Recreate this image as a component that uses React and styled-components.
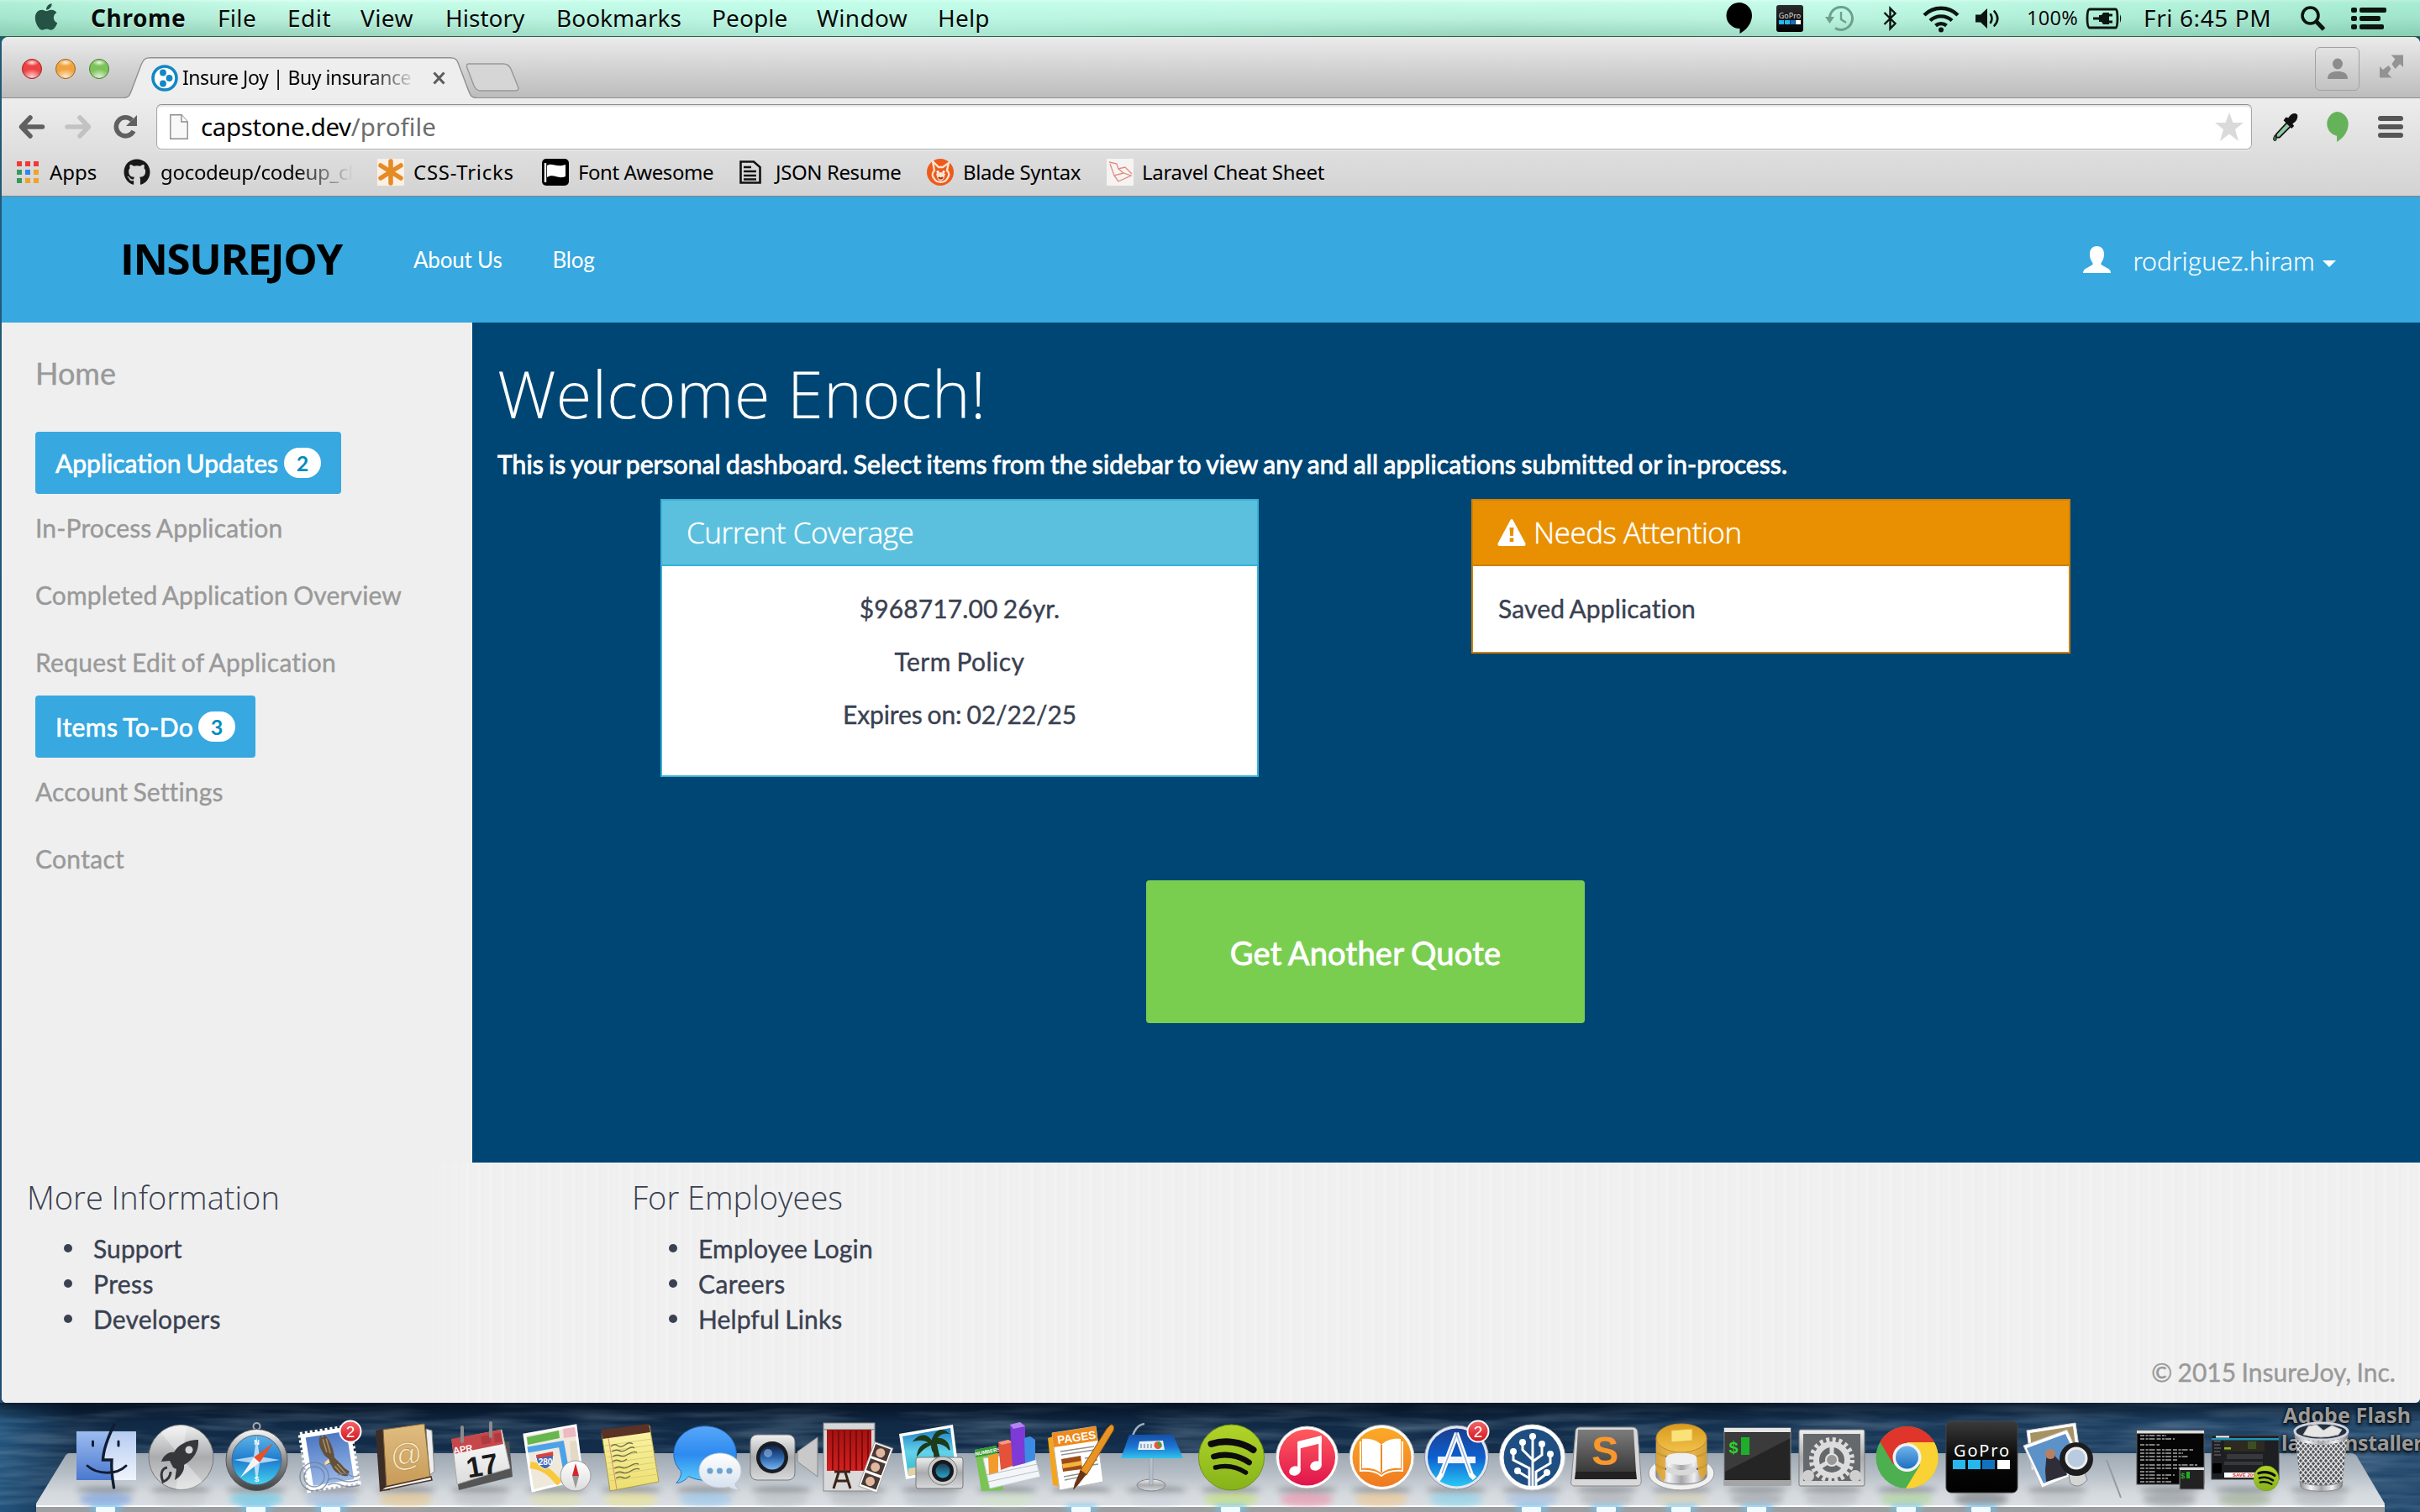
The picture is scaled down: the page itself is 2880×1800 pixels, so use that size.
import React from "react";
import styled, { createGlobalStyle } from "styled-components";
import { FaApple, FaGithub } from "react-icons/fa";

const UI = '"Noto Sans", "Open Sans", sans-serif';
const LATO = 'Lato, "Open Sans", sans-serif';
const OPEN = '"Open Sans", "Noto Sans", sans-serif';

const Global = createGlobalStyle`
  * { box-sizing: border-box; }
  body { margin: 0; overflow: hidden; background: #0b2340; font-variant-ligatures: none; }
  ul, p, h1, h2, h3 { margin: 0; padding: 0; }
  svg { display: block; flex: none; }
`;

const Desktop = styled.div`
  position: relative;
  width: 2880px;
  height: 1800px;
  display: flex;
  flex-direction: column;
  overflow: hidden;
  background:
    linear-gradient(90deg, rgba(40, 96, 140, 0.75) 0, rgba(20, 60, 100, 0) 90px),
    linear-gradient(90deg, rgba(30, 70, 105, 0) 60%, rgba(38, 80, 118, 0.75) 100%),
    linear-gradient(180deg, #0f4a3a 0, #0d4437 500px, #0d2f4c 900px, #0a1b33 1668px, #112b47 1700px, #14304e 1800px);
`;

/* ---------- menu bar ---------- */
const MenuBar = styled.header`
  height: 44px;
  flex: none;
  display: flex;
  align-items: center;
  justify-content: space-between;
  padding: 0 40px 0 40px;
  border-bottom: 1px solid #2c5f4d;
  font: 400 28px/42px ${UI};
  color: #050b09;
  background:
    linear-gradient(90deg, rgba(90, 190, 150, 0.22) 0, rgba(255, 255, 255, 0) 12%, rgba(190, 255, 235, 0.5) 35%, rgba(190, 255, 235, 0.35) 45%, rgba(255, 255, 255, 0) 62%, rgba(190, 255, 235, 0.25) 75%, rgba(80, 190, 150, 0.25) 100%),
    linear-gradient(180deg, #e2fff5 0, #c6fce8 3px, #b9f0dc 22px, #98d3bb 43px);
`;
const MenuGroup = styled.div`
  display: flex;
  align-items: center;
  height: 43px;
`;
const MenuItem = styled.span`
  width: ${(p) => p.$w}px;
  letter-spacing: ${(p) => p.$ls || 0}px;
  font-weight: ${(p) => (p.$bold ? 700 : 400)};
  font-size: ${(p) => p.$size || 28}px;
  line-height: 41px;
  padding-bottom: 1px;
  white-space: nowrap;
  text-shadow: 0 1px 1px rgba(255, 255, 255, 0.5);
`;
const Spot = styled.span`
  display: flex;
  justify-content: center;
  align-items: center;
  width: ${(p) => p.$w}px;
  margin-right: ${(p) => p.$gap || 0}px;
`;
const AppleSlot = styled(Spot)`
  padding-bottom: 4px;
  color: #245244;
`;
const GoProMini = styled.span`
  width: 32px;
  height: 32px;
  margin-right: 26px;
  border-radius: 3px;
  background: linear-gradient(#2c2c2c, #000);
  display: flex;
  flex-direction: column;
  align-items: center;
  justify-content: center;
  color: #ddd;
  font: 400 9px/10px ${UI};
`;

/* ---------- browser window ---------- */
const Browser = styled.section`
  width: 2878px;
  height: 1626px;
  margin-left: 2px;
  flex: none;
  display: flex;
  flex-direction: column;
  overflow: hidden;
  border-radius: 8px 8px 6px 6px;
  background: #f0f0f0;
`;
const TitleBar = styled.div`
  height: 73px;
  flex: none;
  display: flex;
  align-items: flex-start;
  padding-left: 24px;
  background: linear-gradient(#ebebeb 0, #d8d8d8 40%, #bcbcbc 100%);
  border-bottom: 1px solid #8f8f8f;
`;
const Lights = styled.div`
  display: flex;
  gap: 16px;
  padding-top: 26px;
  width: 121px;
`;
const Light = styled.i`
  width: 24px;
  height: 24px;
  border-radius: 50%;
  border: 1.5px solid ${(p) => p.$edge};
  background:
    radial-gradient(ellipse 8px 4px at 50% 16%, rgba(255, 255, 255, 0.85), rgba(255, 255, 255, 0)),
    radial-gradient(ellipse 12px 9px at 50% 92%, rgba(255, 255, 255, 0.75), rgba(255, 255, 255, 0)),
    ${(p) => p.$c};
`;
const Tab = styled.div`
  position: relative;
  width: 420px;
  height: 49px;
  margin-top: 24px;
  margin-bottom: -1px;
  display: flex;
  align-items: center;
  padding-left: 33px;
`;
const TabShape = styled.svg`
  position: absolute;
  left: 0;
  top: 0;
`;
const TabTitle = styled.span`
  position: relative;
  width: 282px;
  margin: 0 16px 2px 5px;
  overflow: hidden;
  white-space: nowrap;
  font: 400 23px/34px ${UI};
  letter-spacing: -0.45px;
  color: #000;
  mask-image: linear-gradient(90deg, #000 78%, transparent 99%);
`;
const Above = styled.span`
  position: relative;
`;
const NewTab = styled.svg`
  margin-top: 31px;
  margin-left: -14px;
`;
const TitleRight = styled.div`
  margin-left: auto;
  display: flex;
  align-items: flex-start;
  gap: 24px;
  padding: 12px 20px 0 0;
`;
const UserBox = styled.div`
  width: 53px;
  height: 52px;
  border: 1.5px solid #a2a2a2;
  border-radius: 6px;
  display: flex;
  justify-content: center;
  align-items: center;
`;
const Toolbar = styled.div`
  height: 117px;
  flex: none;
  display: flex;
  flex-direction: column;
  background: linear-gradient(#ededed, #e2e2e2 40%, #d3d3d3);
  border-bottom: 1.5px solid #8a8180;
`;
const NavRow = styled.div`
  display: flex;
  align-items: center;
  height: 54px;
  margin-top: 7px;
  padding-left: 20px;
`;
const Address = styled.div`
  width: 2494px;
  height: 54px;
  margin-left: 20px;
  display: flex;
  align-items: center;
  padding: 0 9px 0 15px;
  background: #fff;
  border: 1.5px solid #a6a6a6;
  border-top-color: #8d8d8d;
  border-radius: 6px;
  box-shadow: inset 0 2px 2px #e4e4e4, 0 1px 0 #f4f4f4;
  font: 400 29.5px/50px ${UI};
`;
const Host = styled.span`
  margin-left: 15px;
  color: #000;
  letter-spacing: -0.4px;
`;
const Path = styled.span`
  color: #6d6d6d;
  margin-right: auto;
  letter-spacing: 0.1px;
`;
const Extensions = styled.div`
  display: flex;
  align-items: center;
  margin-left: 24px;
  gap: 31px;
`;
const Bookmarks = styled.div`
  display: flex;
  align-items: center;
  height: 54px;
  padding-left: 17px;
`;
const Bookmark = styled.div`
  display: flex;
  align-items: center;
  gap: ${(p) => p.$gap}px;
  width: ${(p) => p.$w}px;
  white-space: nowrap;
  font: 400 24px/34px ${UI};
  color: #000;
  letter-spacing: ${(p) => p.$ls || 0}px;
`;
const Faded = styled.span`
  width: 232px;
  overflow: hidden;
  mask-image: linear-gradient(90deg, #000 68%, transparent 99%);
`;

/* ---------- site ---------- */
const SiteHeader = styled.div`
  height: 150px;
  flex: none;
  display: flex;
  align-items: center;
  justify-content: space-between;
  background: #37a8e0;
  color: #fff;
  padding: 0 100px 0 141px;
`;
const SiteNav = styled.nav`
  display: flex;
  align-items: center;
`;
const Logo = styled.span`
  width: 349px;
  padding-bottom: 5px;
  color: #000;
  font: 700 51px/60px ${OPEN};
  letter-spacing: -1.4px;
`;
const NavLink = styled.a`
  font: 400 26px/40px ${LATO};
  letter-spacing: -0.2px;
  margin-right: 60px;
`;
const Account = styled.div`
  display: flex;
  align-items: center;
  font: 300 32px/44px ${LATO};
  letter-spacing: 0.2px;
  -webkit-text-stroke: 0.3px #fff;
`;
const AccountName = styled.span`
  margin: 2px 9px 0 26px;
`;
const Caret = styled.i`
  margin-top: 10px;
  border: 8px solid transparent;
  border-top-color: #fff;
  border-bottom: 0;
`;
const SiteBody = styled.div`
  display: grid;
  grid-template-columns: 560px 1fr;
  height: 1000px;
  flex: none;
`;
const Sidebar = styled.aside`
  display: flex;
  flex-direction: column;
  align-items: flex-start;
  padding: 20px 0 0 40px;
  background: #efefef;
`;
const SideLink = styled.a`
  height: 80px;
  display: flex;
  align-items: center;
  margin-bottom: ${(p) => (p.$lead ? 30 : 0)}px;
  font: 400 ${(p) => (p.$lead ? 36 : 30)}px/40px ${LATO};
  letter-spacing: ${(p) => p.$ls}px;
  word-spacing: -1.5px;
  color: #999;
  -webkit-text-stroke: 0.4px #999;
`;
const SideButton = styled.a`
  width: ${(p) => p.$w}px;
  height: 74px;
  display: flex;
  align-items: center;
  justify-content: space-between;
  padding: 0 24px 1px 24px;
  border-radius: 4px;
  background: #37a8e0;
  color: #fff;
  font: 400 30px/40px ${LATO};
  letter-spacing: ${(p) => p.$ls}px;
  word-spacing: -1.5px;
  -webkit-text-stroke: 0.7px #fff;
`;
const Count = styled.b`
  width: 44px;
  height: 36px;
  border-radius: 18px;
  background: #fff;
  color: #008cba;
  font: 700 25px/36px ${LATO};
  letter-spacing: 0;
  text-align: center;
  -webkit-text-stroke: 0;
`;
const Main = styled.main`
  background: #004674;
  color: #fff;
  padding: 38px 0 0 30px;
`;
const Title = styled.h1`
  font: 300 78px/92px ${OPEN};
`;
const Lead = styled.p`
  font: 400 30px/76px ${LATO};
  letter-spacing: 0.1px;
  word-spacing: -1.5px;
  margin-bottom: 4px;
  -webkit-text-stroke: 0.9px #fff;
`;
const Panels = styled.div`
  display: flex;
  align-items: flex-start;
  gap: 253px;
  margin-left: 194px;
`;
const Panel = styled.section`
  width: ${(p) => p.$w}px;
  border: 2px solid ${(p) => p.$edge};
  background: #fff;
`;
const PanelHead = styled.h3`
  height: 78px;
  display: flex;
  align-items: center;
  gap: 9px;
  padding: 0 29px 0;
  background: ${(p) => p.$bg};
  border-bottom: 2px solid ${(p) => p.$edge};
  font: 300 35px/50px ${OPEN};
  letter-spacing: ${(p) => p.$ls}px;
  -webkit-text-stroke: 0.5px #fff;
`;
const PanelBody = styled.div`
  padding: 29px 30px;
  display: flex;
  flex-direction: column;
  align-items: ${(p) => (p.$center ? "center" : "flex-start")};
  gap: 20px;
  padding-bottom: ${(p) => (p.$center ? 51 : 30)}px;
  color: #3a4151;
`;
const Line = styled.p`
  font: 400 30px/43px ${LATO};
  letter-spacing: ${(p) => p.$ls}px;
  word-spacing: -1.5px;
  -webkit-text-stroke: 0.4px #3a4151;
`;
const Quote = styled.a`
  display: flex;
  align-items: center;
  justify-content: center;
  width: 522px;
  height: 170px;
  margin: 123px 0 0 772px;
  padding-top: 1px;
  border-radius: 4px;
  background: #79ce50;
  font: 400 38px/50px ${LATO};
  letter-spacing: 0.25px;
  word-spacing: -1.5px;
  -webkit-text-stroke: 0.9px #fff;
`;
const Footer = styled.footer`
  flex: 1;
  display: flex;
  flex-direction: column;
  padding: 18px 29px 0 30px;
  background:
    linear-gradient(90deg, #efefef 500px, rgba(239, 239, 239, 0) 560px),
    repeating-linear-gradient(90deg, #f0f0f0 0 6px, #f2f2f2 6px 10px, #efefef 10px 14px);
  color: #3a4151;
`;
const FootCols = styled.div`
  display: grid;
  grid-template-columns: 720px 1fr;
`;
const FootHead = styled.h3`
  font: 300 38px/46px ${OPEN};
  margin-bottom: 17px;
`;
const FootItem = styled.li`
  display: flex;
  align-items: center;
  gap: 25px;
  padding-left: 44px;
  font: 400 30px/42px ${LATO};
  letter-spacing: ${(p) => p.$ls}px;
  word-spacing: -1.5px;
  -webkit-text-stroke: 0.4px #3a4151;
  &::before {
    content: "";
    width: 10px;
    height: 10px;
    border-radius: 50%;
    background: #3a4151;
  }
`;
const Copyright = styled.p`
  margin-top: 21px;
  text-align: right;
  font: 400 30px/42px ${LATO};
  letter-spacing: 0.05px;
  word-spacing: -1.5px;
  color: #999;
  -webkit-text-stroke: 0.4px #999;
`;

/* ---------- dock ---------- */
const DockArea = styled.div`
  position: relative;
  height: 130px;
  flex: none;
`;
const Shelf = styled.svg`
  position: absolute;
  left: 0;
  top: 0;
`;
const DockRow = styled.div`
  position: relative;
  display: flex;
  padding: 20px 0 0 82px;
`;
const DockCell = styled.div`
  width: 89.3px;
  height: 110px;
  flex: none;
`;
const DockGap = styled.div`
  width: 45px;
`;
const DesktopLabel = styled.span`
  position: absolute;
  left: ${(p) => p.$x}px;
  top: ${(p) => p.$y}px;
  white-space: nowrap;
  font: 700 25px/32px ${UI};
  letter-spacing: ${(p) => p.$ls}px;
  color: #9a9a9a;
  text-shadow: 0 2px 4px #000, 0 0 3px #000;
`;

const G = ({ id, c, x = 0 }) => (
  <linearGradient id={id} x1="0" y1="0" x2={x} y2={x ? 0 : 1}>
    {c.map((k, i) => (
      <stop key={i} offset={i / (c.length - 1)} stopColor={k} />
    ))}
  </linearGradient>
);

const SpotifyMark = ({ cx, cy, r }) => (
  <g transform={`translate(${cx} ${cy}) scale(${r / 39})`}>
    <circle r="39" fill="url(#spot)" stroke="#6c9413" strokeWidth="1" />
    <g fill="none" stroke="#0c0c0c" strokeLinecap="round">
      <path d="M-24 -16C-8 -21 12 -19 26 -9" strokeWidth="8" />
      <path d="M-21 -1C-8 -5 8 -3 21 6" strokeWidth="6.8" />
      <path d="M-19 12C-7 9 6 11 17 18" strokeWidth="5.6" />
    </g>
  </g>
);

const CountBadge = ({ x, y }) => (
  <g>
    <circle cx={x} cy={y} r="12.5" fill="url(#badge)" stroke="#fff" strokeWidth="2" />
    <text x={x} y={y + 7} fontSize="19" fill="#fff" textAnchor="middle" fontFamily='"Liberation Sans", sans-serif'>2</text>
  </g>
);

const icons = {
  finder: (
    <g>
      <rect x="9" y="14" width="71" height="58" fill="url(#findR)" />
      <path d="M9 14H51C44 30 41 40 41 48H51L52 72H9Z" fill="url(#findL)" />
      <g fill="none" stroke="#111c33" strokeWidth="3" strokeLinecap="round">
        <path d="M54 6C44 26 41 38 40.500 48H51C50 60 52 72 53.500 81" strokeWidth="3.400" />
        <path d="M22 55C34 66 57 66 68 55M28.500 26V31M59 26V31" />
      </g>
    </g>
  ),
  launchpad: (
    <g>
      <circle cx="44.500" cy="45" r="38.500" fill="url(#steel)" stroke="#777" />
      <path d="M44.500 45L20 15A38 38 0 0 1 52 7ZM44.500 45L70 74A38 38 0 0 1 38 83Z" fill="#fff" opacity=".35" />
      <path d="M65 24C52 24 41 30 36 39C30 38 24 42 21 50L31 49L35 57L39 59L37 72C44 68 49 61 48 54C60 47 66 37 65 24Z" fill="#35373a" />
      <circle cx="54" cy="36" r="4.500" fill="#d5d5d5" />
      <path d="M28 57C22 58 19 64 23 74C28 72 32 68 32 62" fill="none" stroke="#35373a" strokeWidth="3" />
    </g>
  ),
  safari: (
    <g>
      <circle cx="44.500" cy="8" r="4" fill="none" stroke="#aaa" strokeWidth="2" />
      <circle cx="44.500" cy="48" r="36.500" fill="url(#steel2)" stroke="#555" />
      <circle cx="44.500" cy="48" r="29.500" fill="url(#sea)" stroke="#567" />
      <path d="M44.500 20L48 44L72 48L48 52L44.500 76L41 52L17 48L41 44Z" fill="#e4f3ff" opacity=".75" />
      <path d="M64 28L48 51L41 45Z" fill="#e8502a" />
      <path d="M25 69L41 45L48 51Z" fill="#f4f4f4" />
      <g fontSize="9" fontWeight="700" fill="#fff" textAnchor="middle" fontFamily='"Liberation Sans", sans-serif'>
        <text x="44.500" y="30">N</text><text x="44.500" y="74">S</text>
      </g>
    </g>
  ),
  mail: (
    <g>
      <g transform="rotate(-9 44 46)">
        <rect x="12" y="12" width="60" height="68" fill="#fff" stroke="#fff" strokeWidth="5" strokeDasharray="3 3" />
        <rect x="18" y="17" width="49" height="58" fill="url(#stamp)" />
        <path d="M36 17C32 22 32 30 35 37C36 41 38 43 41 46L35 50L36 53L42 52L45 60C49 66 55 70 60 70L63 65L58 60C55 55 51 50 48 46C49 36 46 22 40 17L38 21Z" fill="#64513a" />
        <path d="M38 22L40 38M42 22L44 40M50 54L58 66M47 56L54 67" stroke="#a48e69" strokeWidth="1.600" />
        <path d="M35 50L41 46L42 51L36 53Z" fill="#eadfc4" />
        <path d="M33.500 50.500L36 50L36 53Z" fill="#e0a52c" />
      </g>
      <g fill="none" stroke="#6f7f99" strokeWidth="1.500" opacity=".75">
        <circle cx="24" cy="68" r="17" /><circle cx="24" cy="68" r="12" />
        <path d="M40 72Q48 68 56 72T76 72M40 78Q48 74 56 78T78 78M52 66Q60 62 66 66T77 66" />
      </g>
      <CountBadge x={67} y={14} />
    </g>
  ),
  contacts: (
    <g>
      <path d="M68 11L75 13L78 62L72 66Z" fill="#eee" stroke="#888" />
      <path d="M8 13L19 11L25 84L13 85Z" fill="#3c2d26" />
      <path d="M17 12L66 5L73 68L21 80Z" fill="url(#tan)" stroke="#8b6838" />
      <path d="M13 85L75 72L74 68L20 80Z" fill="#f3f3f3" stroke="#4a3324" strokeWidth="1.500" />
      <text x="45" y="55" fontSize="38" textAnchor="middle" fill="#f8e9c9" stroke="#b58a48" strokeWidth=".6" transform="rotate(-6 44 45)" fontFamily='"Liberation Sans", sans-serif'>@</text>
    </g>
  ),
  calendar: (
    <g>
      <path d="M11 36L78 26L82 68L18 84Z" fill="#555" />
      <path d="M10 24L69 12L79 58Q50 66 16 77Z" fill="url(#paper)" stroke="#aaa" />
      <path d="M9 23L68 12L71 29L12 41Z" fill="#c7484b" />
      <path d="M44 20L56 18V28L46 30ZM60 17L68 15.500L69 26L61 27.500Z" fill="#b03b3f" />
      <path d="M22 26V9M56 20V4" stroke="#8b8b8b" strokeWidth="4" strokeLinecap="round" />
      <g transform="rotate(-10 42 50)" fontFamily='"Liberation Sans", sans-serif' fontWeight="700">
        <text x="14" y="36" fontSize="11" fill="#fff">APR</text>
        <text x="45" y="67" fontSize="34" fill="#1a1a1a" textAnchor="middle">17</text>
      </g>
    </g>
  ),
  maps: (
    <g>
      <path d="M6 18L67 7L75 70L16 85Z" fill="#efe9dc" stroke="#fff" strokeWidth="3" />
      <path d="M9 21L47 13L48 22L10 30Z" fill="#65b74e" />
      <path d="M52 11L66 9L68 20L53 22Z" fill="#efb9c4" />
      <path d="M60 26L68 25L72 55L62 58Z" fill="#e3d9c4" />
      <path d="M10 36L50 29L56 62" fill="none" stroke="#4ca2e8" strokeWidth="7" />
      <path d="M13 54C30 56 38 64 48 76" fill="none" stroke="#f8c93c" strokeWidth="8" />
      <path d="M20 42L40 38C42 50 38 56 31 59C24 56 20 52 20 42Z" fill="#3f69b8" stroke="#fff" />
      <path d="M20 42L40 38L40.500 43L20.500 46Z" fill="#d8433f" />
      <text x="31" y="54" fontSize="10" fontWeight="700" fill="#fff" textAnchor="middle" fontFamily='"Liberation Sans", sans-serif'>280</text>
      <circle cx="67" cy="67" r="18" fill="url(#paper)" stroke="#9a9a9a" />
      <path d="M67 52L71 67H63Z" fill="#d8242b" /><path d="M67 82L71 67H63Z" fill="#9a9a9a" />
    </g>
  ),
  notes: (
    <g>
      <path d="M9 16L66 7L77 74L19 85Z" fill="url(#note)" stroke="#a99a4a" />
      <path d="M8 12L65 5L67 15L10 23Z" fill="#5b3226" />
      <path d="M13 31L69 23M14 38L70 30M15 45L71 37M16 52L72 44M17 59L73 51M18 66L75 58M19 73L76 65" stroke="#d6cf7c" />
      <g fill="none" stroke="#5c5a3a" strokeWidth="1.400" opacity=".85">
        <path d="M20 32q4-4 8-1t9-1 9-1M21 38q5-3 9-1t10-2 8-1M22 44q5-3 9-1t10-2 10-2M22 50q4-3 8-1t9-2M24 58q5-3 9-1t10-2 10-2M25 64q5-3 9-1t10-2 10-2M26 70q4-3 8-1t9-2" />
      </g>
      <path d="M17 22L27 83" stroke="#d98a7c" />
    </g>
  ),
  messages: (
    <g>
      <path d="M44 8C66 8 82 23 82 42C82 62 66 74 46 74C38 74 30 72 24 69C20 74 14 77 9 77C13 73 15 69 15 63C9 57 6 50 6 42C6 23 22 8 44 8Z" fill="url(#msg)" stroke="#2469bd" transform="scale(.98)" />
      <path d="M61 40C75 40 86 49 86 61C86 68 83 72 79 76C79 80 82 82 85 84C79 84 74 82 71 80C68 81 65 81 61 81C47 81 36 73 36 61C36 49 47 40 61 40Z" fill="url(#msg2)" stroke="#b9c6d6" />
      <circle cx="49" cy="61" r="3.600" fill="#6fa3cf" /><circle cx="60.500" cy="61" r="3.600" fill="#6fa3cf" /><circle cx="72" cy="61" r="3.600" fill="#6fa3cf" />
    </g>
  ),
  facetime: (
    <g>
      <path d="M87 21V68L63 50V38Z" fill="#c9c9c9" stroke="#8c8c8c" />
      <rect x="7" y="18" width="53" height="54" rx="8" fill="url(#steel)" stroke="#777" />
      <circle cx="33" cy="45" r="19" fill="#191c22" />
      <circle cx="33" cy="45" r="14.500" fill="url(#lens)" />
      <circle cx="28" cy="40" r="5" fill="#a9d0ff" opacity=".5" />
    </g>
  ),
  photobooth: (
    <g>
      <rect x="5" y="4" width="61" height="8" fill="#d7d7d7" stroke="#888" />
      <rect x="5" y="12" width="61" height="73" fill="#d9d9d9" stroke="#888" />
      <rect x="9" y="12" width="53" height="49" fill="url(#curtain)" />
      <path d="M16 13V60M23 13V60M30 13V60M37 13V60M44 13V60M51 13V60M58 13V60" stroke="#7d0b0b" strokeWidth="2" />
      <path d="M18 62H37M23 63L17 82M31 63L37 82M20 73H34" stroke="#3a2418" strokeWidth="3" fill="none" />
      <g transform="rotate(20 68 56)">
        <rect x="56" y="29" width="23" height="56" fill="#fff" stroke="#aaa" />
        <path d="M58 31h19v15h-19zM58 49h19v15h-19zM58 67h19v15h-19z" fill="#4a3a35" />
        <circle cx="67" cy="39" r="5.500" fill="#e0b7a0" /><circle cx="67" cy="57" r="5.500" fill="#e0b7a0" /><circle cx="67" cy="75" r="5.500" fill="#e0b7a0" />
      </g>
    </g>
  ),
  iphoto: (
    <g>
      <path d="M6 17L70 6L77 60L14 71Z" fill="#fff" />
      <path d="M10 20L67 10L73 57L17 67Z" fill="url(#beach)" />
      <path d="M17 58L73 50V57L17 67Z" fill="#e4d2a4" />
      <path d="M48 60C50 44 50 34 45 25" stroke="#3c2c18" strokeWidth="4" fill="none" />
      <path d="M45 26C38 16 30 18 24 25C32 23 38 24 43 28C34 28 29 34 28 42C34 34 40 31 45 29C44 36 48 42 54 45C52 38 51 32 50 28C56 28 62 30 66 36C65 26 58 21 50 23C54 17 59 15 64 16C56 9 48 14 45 26Z" fill="#1d3a1b" stroke="#1d3a1b" strokeWidth="1.500" />
      <rect x="26" y="45" width="56" height="37" rx="3" fill="url(#steel)" stroke="#777" />
      <circle cx="58" cy="61" r="17" fill="#ccc" stroke="#777" /><circle cx="58" cy="61" r="13" fill="#16191f" /><circle cx="58" cy="61" r="8.500" fill="url(#lens2)" />
    </g>
  ),
  numbers: (
    <g>
      <path d="M6 36L31 31L40 84L14 85Z" fill="#78c552" />
      <path d="M16 46L76 38L84 68L24 82Z" fill="#f3f6f8" stroke="#c6ced4" />
      <path d="M6 36L32 31L33 40L7 45Z" fill="#3a9a35" />
      <text x="7" y="43" fontSize="6" fontWeight="700" fill="#fff" transform="rotate(-11 7 43)" fontFamily='"Liberation Sans", sans-serif'>NUMBERS</text>
      <path d="M22 43L34 40V63L23 66Z" fill="#f29a2c" /><path d="M34 27L46 24L51 27V55L37 60Z" fill="#e4523a" /><path d="M34 27L46 24L51 27L38 30Z" fill="#f79883" />
      <path d="M48 6L60 3L66 8V52L51 56Z" fill="#7d3ad6" /><path d="M48 6L60 3L66 8L52 11Z" fill="#b385f2" /><path d="M65 22L72 20L78 24V48L66 52Z" fill="#3c8ce6" />
      <path d="M20 66l61-13M22 74l60-13" stroke="#b7bec5" fill="none" />
    </g>
  ),
  pages: (
    <g>
      <path d="M4 22L10 20L18 80L10 78Z" fill="#f5a51c" />
      <path d="M9 16L61 8L70 74L18 84Z" fill="#fff" stroke="#bbb" />
      <path d="M9 16L61 8L63 25L11 33Z" fill="#ee8a1c" />
      <text x="16" y="29" fontSize="13.500" fill="#fff" fontWeight="700" transform="rotate(-8 16 29)" fontFamily='"Liberation Sans", sans-serif'>PAGES</text>
      <path d="M20 47L43 43L45 59L22 62Z" fill="#9c4a1a" /><path d="M21 53L44 49L45 54L22 58Z" fill="#f5b53c" />
      <path d="M19 38l40-6M20 42l40-6M48 46l14-2M49 50l14-2M50 55l14-2M23 68l22-4M24 72l20-4" stroke="#8f8f8f" strokeWidth="1.400" />
      <path d="M79 6C83 6 83 10 82 13L50 66L42 62L74 11Z" fill="#e99322" stroke="#8c520f" /><path d="M43 60L50 65L39 79L34 84L36 76Z" fill="#6a3415" />
    </g>
  ),
  keynote: (
    <g>
      <path d="M13 36C14 18 20 6 30 5" fill="none" stroke="#9fb0bd" strokeWidth="2.400" />
      <ellipse cx="38" cy="78" rx="17" ry="7" fill="url(#steel)" stroke="#7a8794" />
      <path d="M36 44H40V78H36Z" fill="#b7c0ca" stroke="#8995a1" strokeWidth=".6" />
      <path d="M12 18L64 18L76 46L2 46Z" fill="url(#key)" />
      <path d="M24 26L52 25L54 36L22 36Z" fill="#e8f1fb" />
      <circle cx="46" cy="30.500" r="4.500" fill="#e35a3a" /><path d="M46 30.500V26A4.500 4.500 0 0 1 50 33Z" fill="#44a245" />
      <path d="M26 29V34M30 29V34M34 29V34M38 29V34" stroke="#8a98a8" strokeWidth="1.500" />
    </g>
  ),
  spotify: <SpotifyMark cx={44.5} cy={45} r={39} />,
  itunes: (
    <g>
      <circle cx="44.500" cy="45" r="37" fill="#fff" stroke="#bbb" />
      <circle cx="44.500" cy="45" r="33.500" fill="url(#itunes)" />
      <path d="M35 27V60M60 21V54" fill="none" stroke="#fff" strokeWidth="3.500" /><path d="M33.300 26L61.700 19V28L33.300 35Z" fill="#fff" />
      <ellipse cx="30" cy="61" rx="7" ry="5.500" fill="#fff" transform="rotate(-20 30 61)" /><ellipse cx="55" cy="55" rx="7" ry="5.500" fill="#fff" transform="rotate(-20 55 55)" />
    </g>
  ),
  ibooks: (
    <g>
      <circle cx="44.500" cy="45" r="38.500" fill="#fff" stroke="#bbb" />
      <circle cx="44.500" cy="45" r="35" fill="url(#ibooks)" />
      <path d="M44 30C38 24 30 22 21 23V58C31 57 38 59 44 64C50 59 57 57 67 58V23C58 22 50 24 44 30Z" fill="#fff" />
      <path d="M44 30V63" stroke="#ee8d24" strokeWidth="2" /><path d="M19 26V61C31 60 38 62 44 67C50 62 57 60 69 61V26" fill="none" stroke="#fff" strokeWidth="2" />
    </g>
  ),
  appstore: (
    <g>
      <circle cx="44.500" cy="45" r="38" fill="#e2e6ee" stroke="#8a94a8" />
      <circle cx="44.500" cy="45" r="34.500" fill="url(#appst)" />
      <path d="M22 44H67V52H22Z" fill="#f0f4fa" />
      <path d="M45 16L26 66L22 72M44 16L62 66L66 70" fill="none" stroke="#fff" strokeWidth="6" />
      <path d="M45 16L27 64M44 16L61 64" fill="none" stroke="#98b4d8" strokeWidth="1.500" />
      <CountBadge x={70} y={14} />
    </g>
  ),
  sourcetree: (
    <g>
      <circle cx="44.500" cy="45" r="39" fill="#fff" stroke="#ccc" /><circle cx="44.500" cy="45" r="34" fill="#1f4f82" />
      <g stroke="#fff" strokeWidth="3" fill="none">
        <path d="M41 79V58L22 48V40M41 79V70L28 62M45 79V22M49 79V62L66 52V42M49 74L62 64M45 48L33 36V28M45 50L56 42V30" />
      </g>
      <g fill="#fff"><circle cx="45" cy="20" r="4" /><circle cx="22" cy="38" r="4" /><circle cx="33" cy="27" r="4" /><circle cx="56" cy="29" r="4" /><circle cx="66" cy="41" r="4" /><circle cx="27" cy="61" r="4" /><circle cx="62" cy="63" r="4" /></g>
    </g>
  ),
  sublime: (
    <g>
      <path d="M7 14C7 10 10 9 13 9H74C79 9 81 12 81 16L85 70C86 76 84 79 80 79H6C2 79 1 76 2 72Z" fill="#d8d8d8" stroke="#888" />
      <path d="M10 12H76L79 62H7Z" fill="url(#subl)" /><path d="M7 62H79L80 71H6Z" fill="#222" />
      <text x="42" y="54" fontSize="48" fontWeight="700" fill="#f8972b" textAnchor="middle" fontFamily='"Liberation Sans", sans-serif'>S</text>
    </g>
  ),
  sequel: (
    <g>
      <ellipse cx="44" cy="64" rx="39" ry="20" fill="#f1f1f1" stroke="#999" /><ellipse cx="44" cy="64" rx="32" ry="15" fill="#ddd" />
      <path d="M14 22V68C18 80 70 80 74 68V22Z" fill="url(#steelH)" stroke="#888" />
      <path d="M14 38C20 48 68 48 74 38M14 53C20 63 68 63 74 53" fill="none" stroke="#555" strokeWidth="2.500" />
      <path d="M14 22V60L18 68L22 74L25 70V44C34 38 54 38 62 44L64 62L68 72L74 64V22Z" fill="#e3a72c" opacity=".85" />
      <path d="M26 44C34 38 54 38 62 44L62 50Q44 58 26 50Z" fill="#efefef" /><path d="M26 55Q44 64 62 55V62Q44 71 26 62Z" fill="#d9d9d9" />
      <ellipse cx="44" cy="22" rx="30" ry="17" fill="url(#honey)" stroke="#b98a2e" />
      <path d="M32 13L57 11V25L32 27Z" fill="#fbe278" stroke="#e0b43c" />
    </g>
  ),
  terminal: (
    <g>
      <rect x="5" y="10" width="79" height="68" fill="#252525" stroke="#888" /><rect x="5" y="10" width="79" height="5" fill="#e5e5e5" />
      <path d="M6 62L84 22V16H6Z" fill="#fff" opacity=".1" /><rect x="5" y="72" width="79" height="6" fill="#a5a5a5" />
      <text x="10" y="40" fontSize="20" fontWeight="700" fill="#2bd32b" fontFamily='"Liberation Mono", monospace'>$</text><rect x="25" y="21" width="10" height="21" fill="#1fae2a" />
    </g>
  ),
  prefs: (
    <g>
      <rect x="5" y="12" width="78" height="67" rx="2" fill="url(#steel)" stroke="#777" /><rect x="10" y="17" width="68" height="56" fill="#66696c" />
      <circle cx="16" cy="67" r="7" fill="#cfcfcf" /><circle cx="72" cy="67" r="7" fill="#cfcfcf" />
      <circle cx="44" cy="48" r="24" fill="none" stroke="#dcdcdc" strokeWidth="6" strokeDasharray="4 3.540" />
      <circle cx="44" cy="48" r="18.500" fill="none" stroke="#dcdcdc" strokeWidth="7" />
      <path d="M44 48V30M44 48L29 57M44 48L59 57" stroke="#dcdcdc" strokeWidth="5" /><circle cx="44" cy="48" r="7" fill="#999" stroke="#e5e5e5" strokeWidth="2" />
    </g>
  ),
  chrome: (
    <g>
      <circle cx="44.500" cy="45" r="37" fill="#4caf50" />
      <path d="M12.500 26.500L28 53L44.500 45V27H77A37 37 0 0 0 12.500 26.500Z" fill="#e0352b" />
      <path d="M77 27H44.500L60 54L43 82A37 37 0 0 0 77 27Z" fill="#fbd233" />
      <circle cx="44.500" cy="45" r="17" fill="#f2f2f2" /><circle cx="44.500" cy="45" r="13.500" fill="url(#chr)" />
    </g>
  ),
  gopro: (
    <g>
      <rect x="2" y="2" width="85" height="85" rx="6" fill="url(#gop)" stroke="#444" />
      <text x="44" y="44" fontSize="20" fill="#fff" textAnchor="middle" textLength="66" fontFamily={UI}>GoPro</text>
      <path d="M10 48h15v11H10z" fill="#25b7ee" /><path d="M28 48h15v11H28z" fill="#25b7ee" /><path d="M45 48h15v11H45z" fill="#1173bd" /><path d="M63 48h15v11H63z" fill="#fff" />
    </g>
  ),
  preview: (
    <g>
      <path d="M8 13L66 4L73 52L14 60Z" fill="#fff" stroke="#ccc" /><path d="M12 16L63 8L66 30L14 38Z" fill="#a79263" />
      <path d="M4 31L56 12L78 60L26 81Z" fill="#fff" stroke="#bbb" /><path d="M8 34L54 17L73 57L28 76Z" fill="#5d92c9" />
      <path d="M32 38C38 34 42 38 42 44L50 52L56 66L31 74L30 60Z" fill="#2f2d38" /><circle cx="36" cy="41" r="6" fill="#b98060" />
      <path d="M58 66L76 60L80 72Q70 84 60 76Z" fill="#d5d5d5" stroke="#888" /><circle cx="67" cy="47" r="20" fill="#1d1d1f" /><circle cx="67" cy="46" r="12" fill="#b9cbe0" stroke="#eee" strokeWidth="3" />
    </g>
  ),
  miniTerminal: (
    <g>
      <rect x="5" y="13" width="80" height="64" fill="#050505" stroke="#555" /><rect x="5" y="13" width="80" height="3.500" fill="#ddd" />
      <path d="M9 19H40M9 23H50M9 30H32M9 36H72M9 40H60M9 44H66M9 48H54M9 54H78M9 58H74M9 62H28M9 66H50M9 70H42M9 74H46" stroke="#a8a8a8" strokeWidth="1.400" strokeDasharray="5 1.500 3 1 7 2" />
      <rect x="56" y="57" width="29" height="26" fill="#222" stroke="#888" /><rect x="56" y="57" width="29" height="3" fill="#ddd" /><rect x="64" y="62" width="4" height="8" fill="#1fae2a" />
      <text x="57" y="70" fontSize="9" fill="#2bd32b" fontFamily='"Liberation Mono", monospace'>$</text>
    </g>
  ),
  miniSpotify: (
    <g>
      <rect x="5" y="19" width="80" height="52" fill="#1e1f22" stroke="#444" /><rect x="5" y="22" width="80" height="2.500" fill="#1f93b8" /><rect x="10" y="19.500" width="16" height="2" fill="#fff" />
      <rect x="20" y="25" width="48" height="13" fill="#2e2a22" /><path d="M48 26h10v9H48z" fill="#3d4f22" /><rect x="20" y="33" width="8" height="2.500" fill="#8cbb1c" />
      <path d="M23 41H66V47H23ZM20 50H66V54H20Z" fill="#36383c" /><rect x="6" y="52" width="11" height="12" fill="#000" /><path d="M8 26h8M8 30h7M8 34h8M8 38h7M8 42h8" stroke="#777" />
      <rect x="20" y="63" width="44" height="6" fill="#fff" /><text x="30" y="68.500" fontSize="6" fontWeight="700" fill="#e11f2b" fontFamily='"Liberation Sans", sans-serif'>SAVE 20%</text>
      <SpotifyMark cx={70} cy={70} r={15} />
    </g>
  ),
  trash: (
    <g>
      <path d="M14 17L21 79C25 86 66 86 70 79L77 17Z" fill="#55585c" />
      <path d="M14 17L21 79C25 86 66 86 70 79L77 17Z" fill="url(#mesh)" />
      <ellipse cx="45.500" cy="15" rx="31" ry="9" fill="#23313f" />
      <path d="M13 14C16 30 75 30 78 14L77 22C70 32 20 32 14 22Z" fill="url(#steelH)" />
      <path d="M24 18L30 8L40 6L48 13L58 7L70 12L66 18Q45 24 24 18Z" fill="#e6e6e6" stroke="#b5b5b5" />
      <ellipse cx="45.500" cy="14" rx="31.500" ry="10" fill="none" stroke="#d2d2dc" strokeWidth="3" />
      <path d="M20 73C26 80 65 80 71 73L70 80C66 87 25 87 21 80Z" fill="url(#steelH)" stroke="#888" />
    </g>
  ),
};

const dock = [
  ["finder", "#6f9ae0", 1], ["launchpad", "#c2c6c9"], ["safari", "#58c7e8", 1], ["mail", "#9db8dd", 1], ["contacts", "#e8c382"],
  ["calendar", "#b9bdc2"], ["maps", "#e0dfa8"], ["notes", "#eee487"], ["messages", "#8fc3ee"], ["facetime", "#b8bdc2"],
  ["photobooth", "#b7bbbf"], ["iphoto", "#b4bcc2"], ["numbers", "#cfe3c4"], ["pages", "#dcdfe2", 1], ["keynote", "#cbd2da"],
  ["spotify", "#bfe06a", 1], ["itunes", "#f08ba6"], ["ibooks", "#f3c486"], ["appstore", "#7ed1ee"], ["sourcetree", "#9dbbe0", 1],
  ["sublime", "#a8abae", 1], ["sequel", "#d6cdb0", 1], ["terminal", "#9a9ea2", 1], ["prefs", "#b4b8bc"], ["chrome", "#a9d490", 1],
  ["gopro", "#6d7276", 1], ["preview", "#b9bec3"],
];

const DockIcon = ({ name, glow, running }) => (
  <DockCell>
    <svg width="89.300" height="110" viewBox="0 0 89.300 110">
      <ellipse cx="44" cy="84" rx="36" ry="4" fill="#20262c" opacity=".35" filter="url(#soft)" />
      <ellipse cx="44" cy="95" rx="32" ry="8" fill={glow} opacity=".6" filter="url(#soft)" />
      {icons[name]}
      {running && (
        <g>
          <rect x="26" y="101" width="36" height="10" rx="4" fill="#6fc4f2" opacity=".7" filter="url(#soft)" />
          <rect x="32" y="104" width="23" height="6" rx="1" fill="#f2fbff" />
        </g>
      )}
    </svg>
  </DockCell>
);

const Defs = () => (
  <defs>
    <filter id="soft" x="-50%" y="-100%" width="200%" height="300%"><feGaussianBlur stdDeviation="3.500" /></filter>
    <filter id="sea-noise" x="0" y="0" width="100%" height="100%">
      <feTurbulence type="fractalNoise" baseFrequency="0.008 0.09" numOctaves="3" seed="4" />
      <feColorMatrix values="0 0 0 0 .5  0 0 0 0 .65  0 0 0 0 .8  0 0 0 1.1 -.42" />
    </filter>
    <G id="shade" c={["#04101f", "rgba(4,16,31,0)"]} />
    <G id="shelf" c={["#a2acb5", "#b9c0c8", "#d9dde1", "#e4e7ea"]} />
    <G id="findL" c={["#9dbdf0", "#4a78ce"]} /><G id="findR" c={["#b5cbf2", "#f0f4fc"]} /><G id="stamp" c={["#4d78c4", "#9bb9e8"]} />
    <G id="steel" c={["#f0f0f0", "#a9abad", "#d9dadb"]} /><G id="steel2" c={["#fafafa", "#8a8c8f", "#3f4245"]} />
    <G id="steelH" c={["#888a90", "#f6f6f8", "#a3a5aa", "#f0f0f2", "#7b7d82"]} x={1} />
    <G id="sea" c={["#5fb3e6", "#1d7cd0", "#46d3ee"]} /><G id="tan" c={["#e0bd80", "#c79a58"]} />
    <G id="paper" c={["#ffffff", "#dcdcdc"]} /><G id="note" c={["#fbf4a6", "#eddf6e"]} />
    <G id="msg" c={["#58a7f8", "#2c8af0", "#5fd0fb"]} /><G id="msg2" c={["#ffffff", "#d4e0ed"]} />
    <G id="lens" c={["#0e1f3f", "#2a62a8", "#78b5f0"]} /><G id="lens2" c={["#1b3b52", "#2aa5c9"]} />
    <G id="curtain" c={["#a31212", "#d42020"]} /><G id="beach" c={["#1c7cc4", "#64d2ea", "#2fb6c9"]} />
    <G id="key" c={["#1450a8", "#1c74d2", "#2fc4ec"]} /><G id="spot" c={["#b2d428", "#86b31b"]} />
    <G id="itunes" c={["#ff5b5e", "#e0144c"]} /><G id="ibooks" c={["#fbaa27", "#ef7a22"]} />
    <G id="appst" c={["#1b3f90", "#0d5fd0", "#29c8f6"]} /><G id="subl" c={["#7c7c7c", "#3a3a3a"]} />
    <G id="honey" c={["#d89a1e", "#f2c14a"]} /><G id="chr" c={["#6fb4ec", "#1f6fc0"]} /><G id="gop" c={["#3a3a3a", "#0a0a0a", "#000"]} />
    <G id="badge" c={["#f4686c", "#d0141c"]} />
    <pattern id="mesh" width="6" height="7" patternUnits="userSpaceOnUse">
      <path d="M0 0L6 7M6 0L0 7" stroke="#e8e8e8" strokeWidth="1.300" />
    </pattern>
  </defs>
);

export default function App() {
  return (
    <Desktop>
      <Global />
      <MenuBar>
        <MenuGroup>
          <AppleSlot $w={30} $gap={38}><FaApple size={36} /></AppleSlot>
          <MenuItem $w={151} $bold $ls={0.6}>Chrome</MenuItem>
          <MenuItem $w={83} $ls={0.3}>File</MenuItem>
          <MenuItem $w={87} $ls={0.5}>Edit</MenuItem>
          <MenuItem $w={101} $ls={0.4}>View</MenuItem>
          <MenuItem $w={132}>History</MenuItem>
          <MenuItem $w={185}>Bookmarks</MenuItem>
          <MenuItem $w={125} $ls={0.1}>People</MenuItem>
          <MenuItem $w={144} $ls={0.3}>Window</MenuItem>
          <MenuItem $w={70} $ls={0.2}>Help</MenuItem>
        </MenuGroup>
        <MenuGroup>
          <Spot $w={32} $gap={29}>
            <svg width="31" height="37" viewBox="0 0 31 37"><path d="M15.500 0A15.500 15.500 0 0 1 31 15.500C31 25 24 33 16.500 37V31A15.500 15.500 0 0 1 15.500 0Z" /></svg>
          </Spot>
          <GoProMini>
            GoPro
            <svg width="26" height="5"><path d="M0 0h6v5H0z" fill="#25b7ee" /><path d="M7 0h6v5H7z" fill="#25b7ee" /><path d="M13.500 0h6v5h-6z" fill="#1173bd" /><path d="M20 0h6v5h-6z" fill="#fff" /></svg>
          </GoProMini>
          <Spot $w={34} $gap={35}>
            <svg width="34" height="32" viewBox="0 0 34 32" fill="none" stroke="#6f9f8f" strokeWidth="3"><path d="M5.500 17A13.500 13.500 0 1 1 12 27.500" /><path d="M19 8V17L25 21" strokeWidth="2.400" /><path d="M0 14H11L5.500 22Z" fill="#6f9f8f" stroke="none" /></svg>
          </Spot>
          <Spot $w={16} $gap={31}>
            <svg width="17" height="30" viewBox="0 0 17 30" fill="none" stroke="#0a1512" strokeWidth="2.400"><path d="M1.500 8L14.500 21L8.500 27V3L14.500 9L1.500 22" /></svg>
          </Spot>
          <Spot $w={44} $gap={19}>
            <svg width="44" height="34" viewBox="0 0 44 34" fill="none" stroke="#0a1512" strokeWidth="4.400"><path d="M2 13A28.500 28.500 0 0 1 42 13" /><path d="M9 19.500A19 19 0 0 1 35 19.500" /><path d="M15.500 25.500A10 10 0 0 1 28.500 25.500" /><circle cx="22" cy="30.500" r="3" fill="#0a1512" stroke="none" /></svg>
          </Spot>
          <Spot $w={29} $gap={32}>
            <svg width="30" height="26" viewBox="0 0 30 26" fill="none" stroke="#0a1512" strokeWidth="2.600"><path d="M0 8.500H6L14 1V25L6 17.500H0Z" fill="#0a1512" stroke="none" /><path d="M18 8Q21 13 18 18M22.500 4.500Q30 13 22.500 21.500" strokeLinecap="round" /></svg>
          </Spot>
          <MenuItem $w={70} $size={23.5} $ls={0.3}>100%</MenuItem>
          <Spot $w={43} $gap={26}>
            <svg width="43" height="26" viewBox="0 0 43 26" fill="none" stroke="#0a1512" strokeWidth="2.800"><path d="M36 2H5Q2 2 2 13T5 24H36Q38 24 38 13T36 2Z" /><path d="M41 8Q43.500 13 41 18Z" fill="#0a1512" stroke="none" /><path d="M9 13H17M28 9H32M28 17H32" strokeWidth="3" /><path d="M16 9H19L21 6H28V20H21L19 17H16Z" fill="#0a1512" stroke="none" /></svg>
          </Spot>
          <MenuItem $w={187} $ls={0.6}>Fri 6:45 PM</MenuItem>
          <Spot $w={30} $gap={30}>
            <svg width="30" height="30" viewBox="0 0 30 30" fill="none" stroke="#0a1512"><circle cx="11.500" cy="11.500" r="9.500" strokeWidth="3.600" /><path d="M18 18L27.500 28" strokeWidth="5" /></svg>
          </Spot>
          <Spot $w={42}>
            <svg width="42" height="26" viewBox="0 0 42 26" fill="#0a1512"><rect width="7" height="6" rx="2" /><rect x="10" width="32" height="6" rx="2" /><rect y="10" width="7" height="6" rx="2" /><rect x="10" y="10" width="25" height="6" rx="2" /><rect y="20" width="7" height="6" rx="2" /><rect x="10" y="20" width="29" height="6" rx="2" /></svg>
          </Spot>
        </MenuGroup>
      </MenuBar>

      <Browser>
        <TitleBar>
          <Lights>
            <Light $c="#ee4243" $edge="#96242a" />
            <Light $c="#f0a440" $edge="#9a6422" />
            <Light $c="#7dc35a" $edge="#4a7f33" />
          </Lights>
          <Tab>
            <TabShape width="420" height="49" viewBox="0 0 420 49">
              <path d="M0 49C6 48 7 46 9 41L21 9C24 2 26 .7 32 .7H388C394 .7 397 2 399 9L411 41C413 46 414 48 420 49Z" fill="#eeeeee" />
              <path d="M0 48.500C6 48 7 46 9 41L21 9C24 2 26 .7 32 .7H388C394 .7 397 2 399 9L411 41C413 46 414 48 420 48.500" fill="none" stroke="#8f8f8f" strokeWidth="1.400" />
            </TabShape>
            <Above>
              <svg width="32" height="32" viewBox="0 0 32 32"><circle cx="16" cy="16" r="14" fill="#fff" stroke="#1487c4" strokeWidth="3.600" /><circle cx="14" cy="9.500" r="3.900" fill="#1487c4" /><circle cx="21.500" cy="16" r="3.900" fill="#1487c4" /><circle cx="14" cy="22.500" r="3.900" fill="#1487c4" /></svg>
            </Above>
            <TabTitle>Insure Joy | Buy insurance w</TabTitle>
            <Above><svg width="15" height="16" viewBox="0 0 15 16"><path d="M1.500 1.500L13.500 14.500M13.500 1.500L1.500 14.500" stroke="#5c5c5c" strokeWidth="3" /></svg></Above>
          </Tab>
          <NewTab width="66" height="34" viewBox="0 0 66 34"><path d="M5 1H46C51 1 53 3 55 7L63 27C65 31 64 33 60 33H19C15 33 13 31 11 27L3 6C2 3 2 1 5 1Z" fill="#d6d6d6" stroke="#999" strokeWidth="1.500" /></NewTab>
          <TitleRight>
            <UserBox><svg width="26" height="26" viewBox="0 0 26 26" fill="#8c8c8c"><ellipse cx="13" cy="7" rx="6" ry="6.500" /><path d="M1 25C1 18 6 16 13 16S25 18 25 25Z" /></svg></UserBox>
            <svg width="28" height="48" viewBox="0 0 29 48" fill="#939393"><path d="M14 9H29V24L25 20L19 26L15 20L19 14Z" /><path d="M0 23L4 27L11 22L14 26L10 32L15 37H0Z" /></svg>
          </TitleRight>
        </TitleBar>
        <Toolbar>
          <NavRow>
            <svg width="144" height="30" viewBox="0 0 144 30" fill="none" strokeWidth="5.500" strokeLinecap="round" strokeLinejoin="round">
              <path d="M28.500 15H4M14 4L3.500 15L14 26" stroke="#606060" />
              <path d="M58 15H83M73 4L83.500 15L73 26" stroke="#c2c2c2" />
              <path d="M135 7A11 11 0 1 0 137 20" stroke="#606060" strokeLinecap="butt" /><path d="M141 1V14H128Z" fill="#606060" stroke="none" />
            </svg>
            <Address>
              <svg width="22" height="30" viewBox="0 0 22 30"><path d="M.8.8H14L21.200 9V29.200H.8Z" fill="#f8f8f8" stroke="#8c8c8c" strokeWidth="1.400" /><path d="M14 .8V9H21.200" fill="#fff" stroke="#8c8c8c" strokeWidth="1.400" /></svg>
              <Host>capstone.dev</Host>
              <Path>/profile</Path>
              <svg width="34" height="34" viewBox="0 0 34 34"><path d="M17 0L21.500 12H34L24 20L28 34L17 25.500L6 34L10 20L0 12H12.500Z" fill="#dadada" /></svg>
            </Address>
            <Extensions>
              <svg width="31" height="35" viewBox="0 0 32 35"><path d="M18 12L23 16L9 30L5 30L5 26Z" fill="#8fc9a4" stroke="#111" strokeWidth="1.800" /><path d="M14 9L24 19L27 16L25 13C30 11 32 6 31 2C29 -1 23 0 20 6L17 5Z" fill="#111" /><path d="M3.500 27C1 31 1 34 3.500 34S6 31 3.500 27Z" fill="#3c7a55" stroke="#111" /></svg>
              <svg width="33" height="36" viewBox="0 0 31 37" preserveAspectRatio="xMinYMid"><path d="M15 0A14.500 15 0 0 1 29.500 15C29.500 25 22.500 33 15.500 37V29.500A14.500 15 0 0 1 15 0Z" fill="#66b25a" /></svg>
              <svg width="30" height="28" viewBox="0 0 30 28" fill="#565656"><rect y="1" width="30" height="6" rx="3" /><rect y="11" width="30" height="6" rx="3" /><rect y="21" width="30" height="6" rx="3" /></svg>
            </Extensions>
          </NavRow>
          <Bookmarks>
            <Bookmark $w={128} $gap={12}>
              <svg width="28" height="27" viewBox="0 0 28 27"><path d="M1 0h6v6H1zM11 0h6v6h-6zM21 0h6v6h-6z" fill="#f03a36" /><path d="M1 10h6v6H1zM1 20h6v6H1z" fill="#359a58" /><path d="M11 10h6v6h-6z" fill="#2f86f0" /><path d="M21 10h6v6h-6zM11 20h6v6h-6zM21 20h6v6h-6z" fill="#f0a322" /></svg>
              Apps
            </Bookmark>
            <Bookmark $w={302} $gap={12} $ls={-0.3}><FaGithub size={32} color="#191717" /><Faded>gocodeup/codeup_cl</Faded></Bookmark>
            <Bookmark $w={196} $gap={11} $ls={0.75}>
              <svg width="32" height="32" viewBox="0 0 32 32"><rect width="32" height="32" fill="#fcefe4" /><path d="M16 3V29M4 8L28 23M28 8L4 23" stroke="#e48b26" strokeWidth="5.500" strokeLinecap="round" /></svg>
              CSS-Tricks
            </Bookmark>
            <Bookmark $w={235} $gap={11} $ls={-0.45}>
              <svg width="32" height="32" viewBox="0 0 32 32"><rect width="32" height="32" rx="5" fill="#000" /><path d="M4 5V28" stroke="#fff" strokeWidth="2.400" /><path d="M6 8C12 4 17 11 28 7V21C19 25 14 17 6 22Z" fill="#fff" /></svg>
              Font Awesome
            </Bookmark>
            <Bookmark $w={223} $gap={17} $ls={-0.4}>
              <svg width="26" height="28" viewBox="0 0 26 28" fill="none" stroke="#111" strokeWidth="2.600"><path d="M1.500 1.500H17L24.500 8V26.500H1.500Z" /><path d="M5 8H14M5 13H20M5 18H20M5 22.500H20" /></svg>
              JSON Resume
            </Bookmark>
            <Bookmark $w={214} $gap={11} $ls={-0.4}>
              <svg width="32" height="32" viewBox="0 0 32 32"><circle cx="16" cy="16" r="16" fill="#ee5a1c" /><path d="M7 3L14 10H19L26 5L24 14C28 17 26 22 24 24C21 29 12 29 9 24C6 21 6 17 9 14Z" fill="none" stroke="#fbe3d2" strokeWidth="2.400" /><path d="M11 18Q16 14 22 18L20 24Q16 28 13 24Z" fill="#fbe3d2" /><circle cx="13" cy="15.500" r="1.500" fill="#fff" /><circle cx="20" cy="15.500" r="1.500" fill="#fff" /><path d="M14 22Q16.500 25 19 22" stroke="#a23a10" strokeWidth="2" fill="none" /></svg>
              Blade Syntax
            </Bookmark>
            <Bookmark $w={300} $gap={10} $ls={-0.3}>
              <svg width="32" height="32" viewBox="0 0 32 32"><rect width="32" height="32" fill="#f6f4f2" /><path d="M3 4L12 6L14 12L22 10L30 18M4 6L9 20L20 17L29 20L14 27L9 20M14 12L20 17" fill="none" stroke="#e08a82" strokeWidth="1.300" /></svg>
              Laravel Cheat Sheet
            </Bookmark>
          </Bookmarks>
        </Toolbar>

        <SiteHeader>
          <SiteNav>
            <Logo>INSUREJOY</Logo>
            <NavLink>About Us</NavLink>
            <NavLink>Blog</NavLink>
          </SiteNav>
          <Account>
            <svg width="33" height="32" viewBox="0 0 33 32" fill="#fff"><path d="M16.500 0C22 0 25 4 25 9.500C25 15 23 18 21.500 20V22L31 27.500Q33 29 33 32H0Q0 29 2 27.500L11.500 22V20C10 18 8 15 8 9.500C8 4 11 0 16.500 0Z" /></svg>
            <AccountName>rodriguez.hiram</AccountName>
            <Caret />
          </Account>
        </SiteHeader>

        <SiteBody>
          <Sidebar>
            <SideLink $lead $ls={0}>Home</SideLink>
            <SideButton $w={364} $ls={0}>Application Updates<Count>2</Count></SideButton>
            <SideLink $ls={0.15}>In-Process Application</SideLink>
            <SideLink $ls={0.12}>Completed Application Overview</SideLink>
            <SideLink $ls={0.25}>Request Edit of Application</SideLink>
            <SideButton $w={262} $ls={0.45}>Items To-Do<Count>3</Count></SideButton>
            <SideLink $ls={0.15}>Account Settings</SideLink>
            <SideLink $ls={0.3}>Contact</SideLink>
          </Sidebar>
          <Main>
            <Title>Welcome Enoch!</Title>
            <Lead>This is your personal dashboard. Select items from the sidebar to view any and all applications submitted or in-process.</Lead>
            <Panels>
              <Panel $w={712} $edge="#36b2d8">
                <PanelHead $bg="#5bc0de" $edge="#36b2d8" $ls={-0.45}>Current Coverage</PanelHead>
                <PanelBody $center>
                  <Line $ls={0.1}>$968717.00 26yr.</Line>
                  <Line $ls={0.45}>Term Policy</Line>
                  <Line $ls={-0.13}>Expires on: 02/22/25</Line>
                </PanelBody>
              </Panel>
              <Panel $w={713} $edge="#d08002">
                <PanelHead $bg="#e99002" $edge="#d08002" $ls={-0.5}>
                  <svg width="34" height="32" viewBox="0 0 34 32"><path d="M15.500 1Q17 -1 18.500 1L33.500 29Q34 32 31.500 32H2.500Q0 32 .5 29Z" fill="#fff" /><path d="M14.500 10H19.500L18.800 20H15.200ZM14.700 22.500H19.300V27H14.700Z" fill="#e99002" /></svg>
                  Needs Attention
                </PanelHead>
                <PanelBody><Line $ls={0.15}>Saved Application</Line></PanelBody>
              </Panel>
            </Panels>
            <Quote>Get Another Quote</Quote>
          </Main>
        </SiteBody>

        <Footer>
          <FootCols>
            <div>
              <FootHead>More Information</FootHead>
              <ul><FootItem $ls={0.1}>Support</FootItem><FootItem $ls={0.4}>Press</FootItem><FootItem $ls={0.2}>Developers</FootItem></ul>
            </div>
            <div>
              <FootHead>For Employees</FootHead>
              <ul><FootItem $ls={0.15}>Employee Login</FootItem><FootItem $ls={0.4}>Careers</FootItem><FootItem $ls={0.1}>Helpful Links</FootItem></ul>
            </div>
          </FootCols>
          <Copyright>© 2015 InsureJoy, Inc.</Copyright>
        </Footer>
      </Browser>

      <DockArea>
        <Shelf width="2880" height="130" viewBox="0 0 2880 130">
          <Defs />
          <rect width="2880" height="130" filter="url(#sea-noise)" opacity=".5" />
          <rect width="2880" height="22" fill="url(#shade)" opacity=".7" />
          <path d="M82 60H2797Q2803 60 2805 64L2838 120L2837 130H43V120L76 66Q79 60 82 60Z" fill="url(#shelf)" opacity=".97" />
          <path d="M43 122H2838V124H43Z" fill="#fdfdfd" />
          <path d="M43 124H2838V130H43Z" fill="#9b9fa2" />
          <path d="M2507 68L2524 113" stroke="#949a9f" strokeWidth="2" />
        </Shelf>
        <DesktopLabel $x={2717} $y={-2} $ls={0.1}>Adobe Flash</DesktopLabel>
        <DesktopLabel $x={2715} $y={31} $ls={0}>la</DesktopLabel>
        <DesktopLabel $x={2790} $y={31} $ls={-0.3}>nstaller</DesktopLabel>
        <DockRow>
          {dock.map(([n, g, r]) => <DockIcon key={n} name={n} glow={g} running={r} />)}
          <DockGap />
          <DockIcon name="miniTerminal" glow="#8b9095" />
          <DockIcon name="miniSpotify" glow="#9aa88a" />
          <DockIcon name="trash" glow="#b0b5ba" />
        </DockRow>
      </DockArea>
    </Desktop>
  );
}
